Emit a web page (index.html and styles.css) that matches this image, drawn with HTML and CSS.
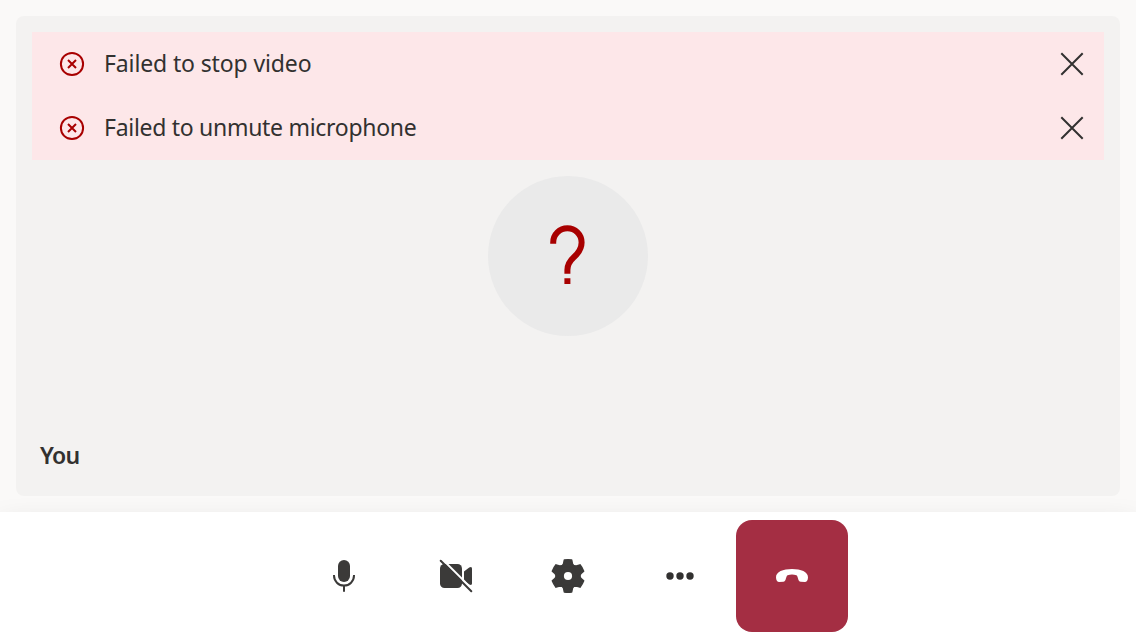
FILE: index.html
```
<!DOCTYPE html>
<html lang="en">
<head>
<meta charset="utf-8">
<title>Call</title>
<link rel="stylesheet" href="styles.css">
</head>
<body>
<main class="stage">
  <section class="tile">
    <div class="errors">
      <div class="error">
        <svg class="error-icon" viewBox="0 0 26 26"><circle cx="13" cy="13" r="11.1"/><path d="M9 9l8 8M17 9l-8 8"/></svg>
        <span class="error-text stop">Failed to stop video</span>
        <button class="dismiss" aria-label="Dismiss"><svg viewBox="0 0 24 24"><path d="M1.3 1.3l21.4 21.4M22.7 1.3L1.3 22.7"/></svg></button>
      </div>
      <div class="error">
        <svg class="error-icon" viewBox="0 0 26 26"><circle cx="13" cy="13" r="11.1"/><path d="M9 9l8 8M17 9l-8 8"/></svg>
        <span class="error-text unmute">Failed to unmute microphone</span>
        <button class="dismiss" aria-label="Dismiss"><svg viewBox="0 0 24 24"><path d="M1.3 1.3l21.4 21.4M22.7 1.3L1.3 22.7"/></svg></button>
      </div>
    </div>
    <div class="avatar">
      <svg viewBox="0 0 160 160"><path d="M65.2 67.8V66.5A14.2 14.2 0 0 1 93.6 66.5C93.6 73.5 90 77.5 85.8 81.3C81.5 85.2 79.4 88.5 79.4 94V97.8M79.4 102.2V108"/></svg>
    </div>
    <div class="name">You</div>
  </section>
</main>
<footer class="controls">
  <button class="control" aria-label="Microphone">
    <svg viewBox="0 0 40 40"><rect class="fill" x="14" y="4" width="12" height="22" rx="6"/><path class="line" d="M10 19v.6a10 10 0 0 0 20 0v-.6M20 30V35.7"/></svg>
  </button>
  <button class="control" aria-label="Camera">
    <svg viewBox="0 0 40 40"><rect class="fill" x="4" y="8" width="22" height="24" rx="4.5"/><path class="fill" d="M28 15.5l5.2-4q2.8-1.4 2.8 1v15.1q0 2.2-2.8 1L28 24.5z"/><path class="gap" d="M6.8 3.7L37 33.9"/><path class="line slash" d="M4.7 4.7L35.3 35.3"/></svg>
  </button>
  <button class="control" aria-label="Settings">
    <svg viewBox="-20 -20 40 40"><circle class="fill" r="12"/><g class="teeth"><path id="tooth" d="M-3.7-16Q0-16.6 3.7-16L4.5-12.2 6-10.2V-9H-6V-10.2L-4.5-12.2z"/><use href="#tooth" transform="rotate(60)"/><use href="#tooth" transform="rotate(120)"/><use href="#tooth" transform="rotate(180)"/><use href="#tooth" transform="rotate(240)"/><use href="#tooth" transform="rotate(300)"/></g><circle class="hole" r="4.1"/></svg>
  </button>
  <button class="control" aria-label="More">
    <svg viewBox="0 0 40 40"><g class="fill dots"><circle cx="10" cy="20" r="3.7"/><circle cx="20" cy="20" r="3.7"/><circle cx="30" cy="20" r="3.7"/></g></svg>
  </button>
  <button class="control hangup" aria-label="Leave">
    <svg viewBox="0 0 40 40"><path d="M20 13C11 13 4 15.8 4 21.3C4 24.4 5.3 26 7.2 26L11.3 25.8C14.4 25.4 13.6 20.4 15.6 19.2Q20 17.6 24.4 19.2C26.4 20.4 25.6 25.4 28.7 25.8L32.8 26C34.7 26 36 24.4 36 21.3C36 15.8 29 13 20 13z"/></svg>
  </button>
</footer>
</body>
</html>
```
FILE: styles.css
```
* { box-sizing: border-box; }
body {
  margin: 0;
  height: 640px;
  display: flex;
  flex-direction: column;
  overflow: hidden;
  background: #faf9f8;
  color: #323130;
  font-family: "Segoe UI", "Noto Sans", sans-serif;
}
button { border: 0; padding: 0; background: none; }
svg { display: block; }
.stage { height: 512px; padding: 16px; }
.tile {
  height: 480px;
  padding: 16px;
  display: flex;
  flex-direction: column;
  align-items: center;
  border-radius: 8px;
  background: #f3f2f1;
}
.errors { width: 100%; background: #fde7e9; }
.error {
  height: 64px;
  padding: 0 20px 0 27px;
  display: flex;
  align-items: center;
}
.error-icon {
  width: 26px;
  height: 26px;
  margin-right: 19px;
  fill: none;
  stroke: #a80000;
  stroke-width: 2;
}
.error-text { flex: 1; padding-bottom: 2px; font-size: 23px; line-height: 32px; white-space: nowrap; }
.stop { letter-spacing: -0.13px; }
.unmute { letter-spacing: -0.29px; }
.dismiss svg { width: 24px; height: 24px; fill: none; stroke: #323130; stroke-width: 2; }
.avatar {
  width: 160px;
  height: 160px;
  margin-top: 16px;
  border-radius: 50%;
  background: #eaeaea;
}
.avatar svg { fill: none; stroke: #a80000; stroke-width: 6; }
.name {
  align-self: flex-start;
  margin: auto 0 9px 8px;
  font-size: 23px;
  font-weight: 600;
  line-height: 32px;
  letter-spacing: -0.75px;
}
.controls {
  height: 128px;
  padding: 8px;
  display: flex;
  justify-content: center;
  background: #fff;
  box-shadow: 0 12.8px 28.8px rgba(0, 0, 0, .132);
}
.control {
  width: 112px;
  height: 112px;
  display: grid;
  place-items: center;
  border-radius: 16px;
}
.control svg { width: 40px; height: 40px; }
.fill, .teeth { fill: #3b3a39; }
.dots { fill: #323130; }
.teeth { stroke: #3b3a39; stroke-width: 1.4; stroke-linejoin: round; }
.line { fill: none; stroke: #3b3a39; stroke-width: 2; }
.slash { stroke-linecap: round; }
.gap { stroke: #fff; stroke-width: 2; }
.hole { fill: #fff; }
.hangup { background: #a42e43; }
.hangup svg { fill: #fff; }
```
